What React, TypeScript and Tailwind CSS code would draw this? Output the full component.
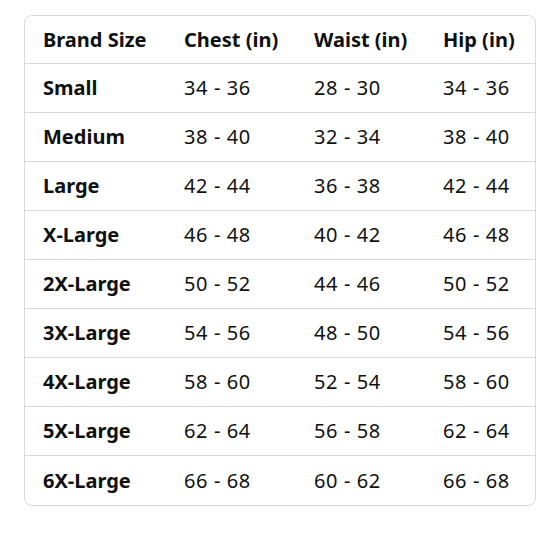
const rows = [
  ['Small', '34 - 36', '28 - 30', '34 - 36'],
  ['Medium', '38 - 40', '32 - 34', '38 - 40'],
  ['Large', '42 - 44', '36 - 38', '42 - 44'],
  ['X-Large', '46 - 48', '40 - 42', '46 - 48'],
  ['2X-Large', '50 - 52', '44 - 46', '50 - 52'],
  ['3X-Large', '54 - 56', '48 - 50', '54 - 56'],
  ['4X-Large', '58 - 60', '52 - 54', '58 - 60'],
  ['5X-Large', '62 - 64', '56 - 58', '62 - 64'],
  ['6X-Large', '66 - 68', '60 - 62', '66 - 68'],
];

const headers = ['Brand Size', 'Chest (in)', 'Waist (in)', 'Hip (in)'];

export default function App() {
  return (
    <div className="w-[556px] h-[535px] bg-white pt-[15px] pl-[24px] font-['Noto_Sans',sans-serif] text-[20px] text-[#0f1111]">
      <div className="w-[512px] border border-[#d5d9d9] rounded-[8px] overflow-hidden">
        <div className="grid grid-cols-[141px_130px_129px_1fr] h-[48px] items-center pl-[18px] font-bold border-b border-[#d5d9d9]">
          {headers.map((h) => (
            <div key={h}>{h}</div>
          ))}
        </div>
        {rows.map((r, i) => (
          <div
            key={r[0]}
            className={
              'grid grid-cols-[141px_130px_129px_1fr] h-[49px] items-center pl-[18px]' +
              (i < rows.length - 1 ? ' border-b border-[#d5d9d9]' : '')
            }
          >
            <div className="font-bold">{r[0]}</div>
            <div className="tracking-[0.6px]">{r[1]}</div>
            <div className="tracking-[0.6px]">{r[2]}</div>
            <div className="tracking-[0.6px]">{r[3]}</div>
          </div>
        ))}
      </div>
    </div>
  );
}
